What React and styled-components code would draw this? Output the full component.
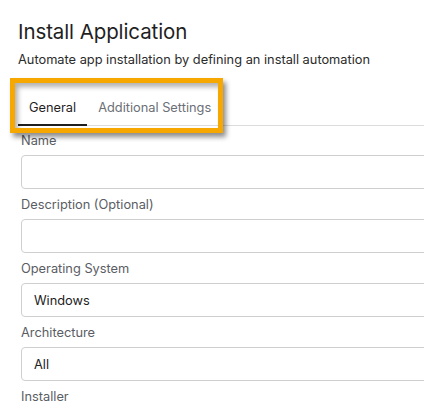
import React from "react";
import styled, { createGlobalStyle } from "styled-components";

const Global = createGlobalStyle`
  html, body { margin: 0; padding: 0; background: #fff; overflow: hidden; }
  body { font-family: Inter, "Noto Sans", sans-serif; -webkit-font-smoothing: antialiased; }
`;

const Page = styled.div`
  position: relative;
  width: 640px;
  padding: 20px 0 0 18px;
  box-sizing: border-box;
`;

const Title = styled.h1`
  margin: 0;
  font-size: 20.5px;
  line-height: 24px;
  font-weight: 400;
  color: #1f1f1f;
  letter-spacing: -0.1px;
`;

const Subtitle = styled.p`
  margin: 8px 0 0;
  font-size: 12.8px;
  line-height: 16px;
  color: #2b2b2b;
`;

const TabBar = styled.div`
  display: flex;
  margin-top: 24px;
  border-bottom: 1px solid #dcdcdc;
`;

const Tab = styled.div`
  padding: 8px 11px 8px;
  font-size: 12.8px;
  line-height: 16px;
  color: ${(p) => (p.$active ? "#1f1f1f" : "#6b6f76")};
  border-bottom: 2px solid ${(p) => (p.$active ? "#1f1f1f" : "transparent")};
  margin-bottom: -1px;
`;

const Form = styled.div`
  display: flex;
  flex-direction: column;
  gap: 8px;
  padding: 7px 0 0 3px;
`;

const Field = styled.div`
  display: flex;
  flex-direction: column;
  gap: 6px;
`;

const Label = styled.label`
  font-size: 12.8px;
  line-height: 16px;
  color: #5a5d63;
`;

const Input = styled.div`
  height: 34px;
  box-sizing: border-box;
  border: 1px solid #cfcfcf;
  border-radius: 4px;
  padding: 0 12px;
  display: flex;
  align-items: center;
  font-size: 12.8px;
  color: #222;
`;

const Highlight = styled.div`
  position: absolute;
  left: 10px;
  top: 78px;
  width: 213px;
  height: 55px;
  box-sizing: border-box;
  border: 5px solid #f7a800;
  box-shadow: 3px 4px 5px rgba(0, 0, 0, 0.45), inset 3px 4px 5px rgba(0, 0, 0, 0.3);
  pointer-events: none;
`;

export default function App() {
  return (
    <>
      <Global />
      <Page>
        <Title>Install Application</Title>
        <Subtitle>Automate app installation by defining an install automation</Subtitle>
        <TabBar>
          <Tab $active>General</Tab>
          <Tab>Additional Settings</Tab>
        </TabBar>
        <Form>
          <Field>
            <Label>Name</Label>
            <Input />
          </Field>
          <Field>
            <Label>Description (Optional)</Label>
            <Input />
          </Field>
          <Field>
            <Label>Operating System</Label>
            <Input>Windows</Input>
          </Field>
          <Field>
            <Label>Architecture</Label>
            <Input>All</Input>
          </Field>
          <Field>
            <Label>Installer</Label>
          </Field>
        </Form>
        <Highlight />
      </Page>
    </>
  );
}
